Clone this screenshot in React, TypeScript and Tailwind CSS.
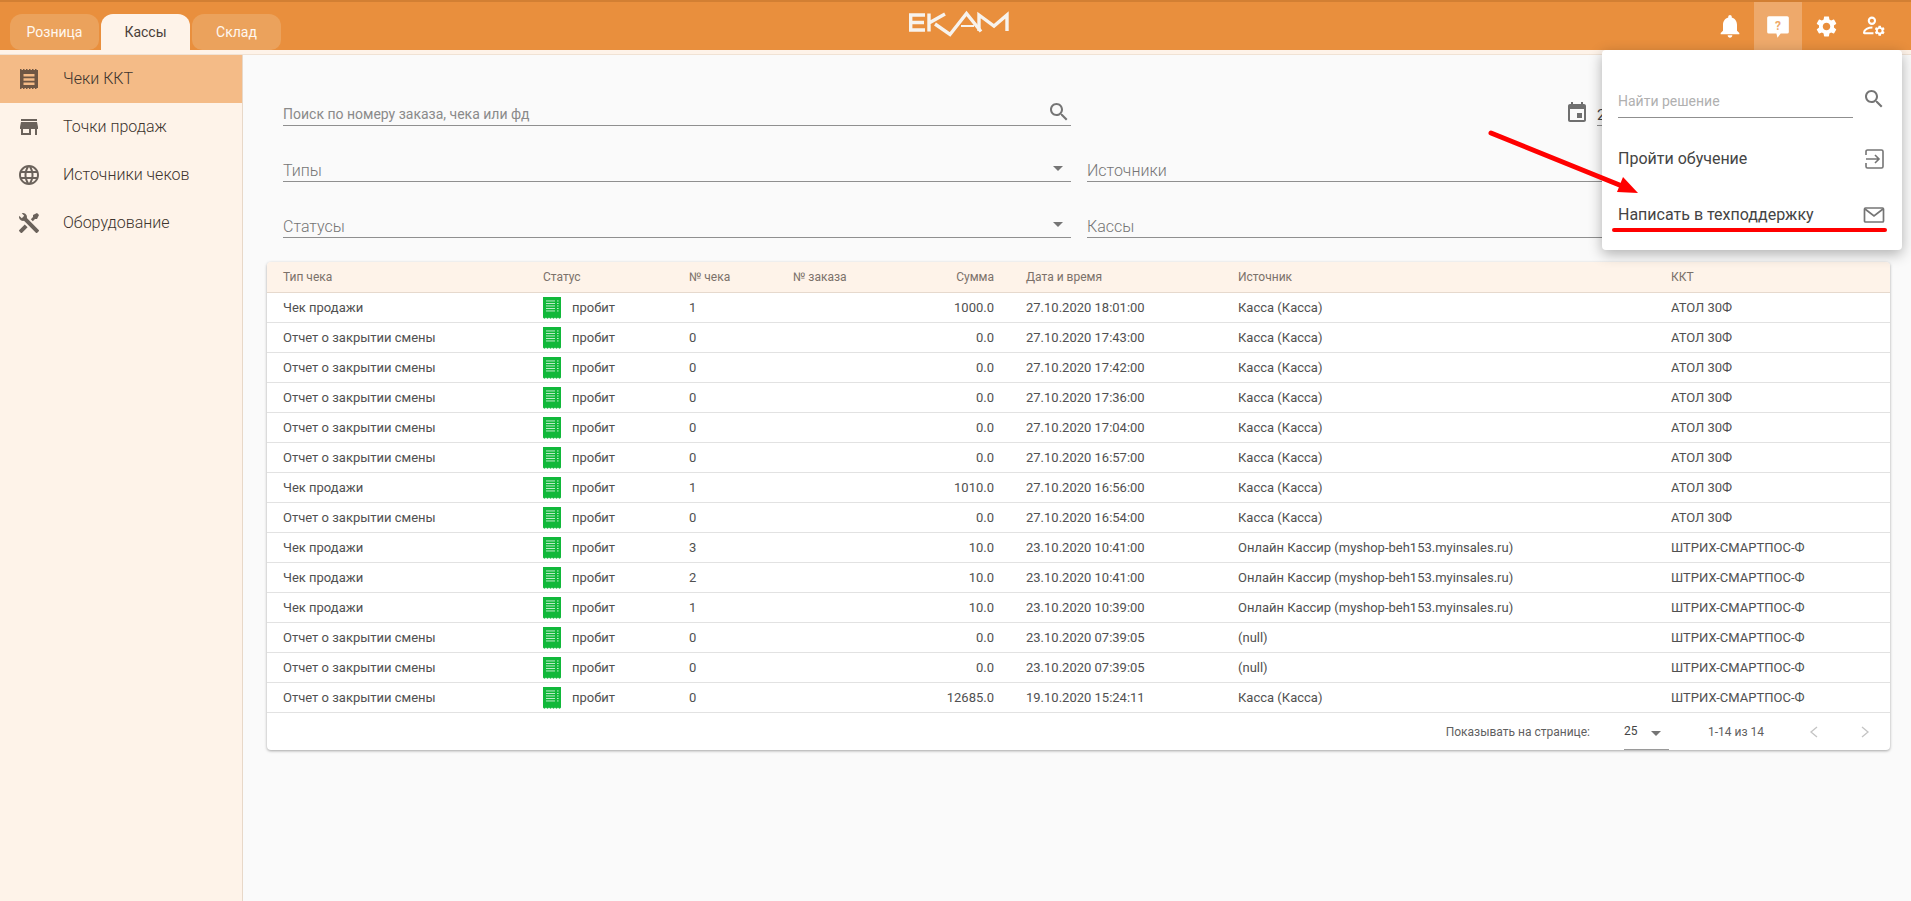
import React from "react";

const P = {
  search: "M15.5 14h-.79l-.28-.27C15.41 12.59 16 11.11 16 9.5 16 5.91 13.09 3 9.5 3S3 5.91 3 9.5 5.91 16 9.5 16c1.61 0 3.09-.59 4.23-1.57l.27.28v.79l5 4.99L20.49 19l-4.99-5zm-6 0C7.01 14 5 11.99 5 9.5S7.01 5 9.5 5 14 7.01 14 9.5 11.99 14 9.5 14z",
  event: "M17 12h-5v5h5v-5zM16 1v2H8V1H6v2H5c-1.11 0-1.99.9-1.99 2L3 19c0 1.1.89 2 2 2h14c1.1 0 2-.9 2-2V5c0-1.1-.9-2-2-2h-1V1h-2zm3 18H5V8h14v11z",
  bell: "M12 22c1.1 0 2-.9 2-2h-4c0 1.1.89 2 2 2zm6-6v-5c0-3.07-1.64-5.64-4.5-6.32V4c0-.83-.67-1.5-1.5-1.5s-1.5.67-1.5 1.5v.68C7.63 5.36 6 7.92 6 11v5l-2 2v1h16v-1l-2-2z",
  gear: "M19.14 12.94c.04-.3.06-.61.06-.94 0-.32-.02-.64-.07-.94l2.03-1.58c.18-.14.23-.41.12-.61l-1.92-3.32c-.12-.22-.37-.29-.59-.22l-2.39.96c-.5-.38-1.03-.7-1.62-.94l-.36-2.54c-.04-.24-.24-.41-.48-.41h-3.84c-.24 0-.43.17-.47.41l-.36 2.54c-.59.24-1.13.57-1.62.94l-2.39-.96c-.22-.08-.47 0-.59.22L2.74 8.87c-.12.21-.08.47.12.61l2.03 1.58c-.05.3-.09.63-.09.94s.02.64.07.94l-2.03 1.58c-.18.14-.23.41-.12.61l1.92 3.32c.12.22.37.29.59.22l2.39-.96c.5.38 1.03.7 1.62.94l.36 2.54c.05.24.24.41.48.41h3.84c.24 0 .44-.17.47-.41l.36-2.54c.59-.24 1.13-.56 1.62-.94l2.39.96c.22.08.47 0 .59-.22l1.92-3.32c.12-.22.07-.47-.12-.61l-2.01-1.58zM12 15.6c-1.98 0-3.6-1.62-3.6-3.6s1.62-3.6 3.6-3.6 3.6 1.62 3.6 3.6-1.62 3.6-3.6 3.6z",
  store: "M20 4H4v2h16V4zm1 10v-2l-1-5H4l-1 5v2h1v6h10v-6h4v6h2v-6h1zm-9 4H6v-4h6v4z",
  globe: "M11.99 2C6.47 2 2 6.48 2 12s4.47 10 9.99 10C17.52 22 22 17.52 22 12S17.52 2 11.99 2zm6.93 6h-2.95c-.32-1.25-.78-2.45-1.38-3.56 1.84.63 3.37 1.91 4.33 3.56zM12 4.04c.83 1.2 1.48 2.53 1.91 3.96h-3.82c.43-1.43 1.08-2.76 1.91-3.96zM4.26 14C4.1 13.36 4 12.69 4 12s.1-1.36.26-2h3.38c-.08.66-.14 1.32-.14 2 0 .68.06 1.34.14 2H4.26zm.82 2h2.95c.32 1.25.78 2.45 1.38 3.56-1.84-.63-3.37-1.9-4.33-3.56zm2.95-8H5.08c.96-1.66 2.49-2.93 4.33-3.56C8.81 5.55 8.35 6.75 8.03 8zM12 19.96c-.83-1.2-1.48-2.53-1.91-3.96h3.82c-.43 1.43-1.08 2.76-1.91 3.96zM14.34 14H9.66c-.09-.66-.16-1.32-.16-2 0-.68.07-1.35.16-2h4.68c.09.65.16 1.32.16 2 0 .68-.07 1.34-.16 2zm.25 5.56c.6-1.11 1.06-2.31 1.38-3.56h2.95c-.96 1.65-2.49 2.93-4.33 3.56zM16.36 14c.08-.66.14-1.32.14-2 0-.68-.06-1.34-.14-2h3.38c.16.64.26 1.31.26 2s-.1 1.36-.26 2h-3.38z",
  tools: "M21.71 20.29L20.29 21.71A1 1 0 0 1 18.88 21.71L7 9.85A3.81 3.81 0 0 1 6 10A4 4 0 0 1 2.22 4.7L4.76 7.24L5.29 6.71L6.71 5.29L7.24 4.76L4.7 2.22A4 4 0 0 1 10 6A3.81 3.81 0 0 1 9.85 7L21.71 18.88A1 1 0 0 1 21.71 20.29M2.29 18.88A1 1 0 0 0 2.29 20.29L3.71 21.71A1 1 0 0 0 5.12 21.71L10.59 16.25L7.76 13.42M20 2L16 4V6L13.83 8.17L15.83 10.17L18 8H20L22 4Z",
  receiptNav: "M3 2h1.500v1H6V2h1.500v1H9V2h1.500v1H12V2h1.500v1H15V2h1.500v1H18V2h1.500v1H21v18h-1.500v1H18v-1h-1.500v1H15v-1h-1.500v1H12v-1h-1.500v1H9v-1H7.500v1H6v-1H4.500v1H3zM6.500 7v2.500h11V7zm0 4.300v2.500h11v-2.500zm0 4.300v2.500h11v-2.500z",
};

function Ico({ d, className }: { d: string; className: string }) {
  return (
    <svg viewBox="0 0 24 24" className={className} fill="currentColor">
      <path d={d} />
    </svg>
  );
}

function Caret({ className }: { className: string }) {
  return (
    <svg viewBox="0 0 10 5" className={className} fill="currentColor">
      <path d="M0 0h10L5 5z" />
    </svg>
  );
}

function ReceiptGreen() {
  return (
    <svg viewBox="0 0 18 22" className="w-[18px] h-[22px] shrink-0">
      <path
        d="M0 0h18v20.500c-.75 1.500-2.250 1.500-3 0-.75 1.500-2.250 1.500-3 0-.75 1.500-2.250 1.500-3 0-.75 1.500-2.250 1.500-3 0-.75 1.500-2.250 1.500-3 0-.75 1.500-2.250 1.500-3 0z"
        fill="#11b83a"
      />
      <g fill="#ffffff" opacity="0.8">
        <rect x="3" y="3.500" width="9" height="0.900" />
        <rect x="3" y="6" width="9" height="0.900" />
        <rect x="3" y="8.500" width="9" height="0.900" />
        <rect x="3" y="11" width="9" height="0.900" />
        <rect x="3" y="13.500" width="9" height="0.900" />
        <rect x="14" y="3.500" width="1.600" height="0.900" />
        <rect x="14" y="6" width="1.600" height="0.900" />
        <rect x="14" y="8.500" width="1.600" height="0.900" />
        <rect x="14" y="11" width="1.600" height="0.900" />
        <rect x="14" y="13.500" width="1.600" height="0.900" />
      </g>
    </svg>
  );
}

const COLS = "grid grid-cols-[260px_146px_104px_100px_133px_212px_433px_1fr] pl-4 items-center";

const S1 = "Отчет о закрытии смены";
const S2 = "Чек продажи";
const K = "Касса (Касса)";
const O = "Онлайн Кассир (myshop-beh153.myinsales.ru)";
const A = "АТОЛ 30Ф";
const H = "ШТРИХ-СМАРТПОС-Ф";

const rows: [string, string, string, string, string, string][] = [
  [S2, "1", "1000.0", "27.10.2020 18:01:00", K, A],
  [S1, "0", "0.0", "27.10.2020 17:43:00", K, A],
  [S1, "0", "0.0", "27.10.2020 17:42:00", K, A],
  [S1, "0", "0.0", "27.10.2020 17:36:00", K, A],
  [S1, "0", "0.0", "27.10.2020 17:04:00", K, A],
  [S1, "0", "0.0", "27.10.2020 16:57:00", K, A],
  [S2, "1", "1010.0", "27.10.2020 16:56:00", K, A],
  [S1, "0", "0.0", "27.10.2020 16:54:00", K, A],
  [S2, "3", "10.0", "23.10.2020 10:41:00", O, H],
  [S2, "2", "10.0", "23.10.2020 10:41:00", O, H],
  [S2, "1", "10.0", "23.10.2020 10:39:00", O, H],
  [S1, "0", "0.0", "23.10.2020 07:39:05", "(null)", H],
  [S1, "0", "0.0", "23.10.2020 07:39:05", "(null)", H],
  [S1, "0", "12685.0", "19.10.2020 15:24:11", K, H],
];

function NavItem({ d, label, active }: { d: string; label: string; active?: boolean }) {
  return (
    <div className={`h-12 flex items-center pl-[17px] ${active ? "bg-[#f4bb87]" : ""}`}>
      <Ico d={d} className={`w-6 h-6 ${active ? "text-[#6e5644]" : "text-[#6b625b]"}`} />
      <span className="ml-[22px] text-[16px] font-light text-[#3d342e]">{label}</span>
    </div>
  );
}

function Field({ label, caret, className }: { label: string; caret?: boolean; className: string }) {
  return (
    <div className={`h-[31px] border-b border-[#8f8f8f] flex items-end justify-between ${className}`}>
      <span className="text-[16px] font-light leading-[20px] text-[#757575]">{label}</span>
      {caret && <Caret className="w-[10px] h-[5px] mb-[10px] mr-[8px] text-[#757575]" />}
    </div>
  );
}

function Tab({ label, active }: { label: string; active?: boolean }) {
  return (
    <div
      className={`h-[36px] w-[89px] rounded-t-[12px] rounded-b-[10px] flex items-center justify-center text-[14px] ${
        active ? "bg-[#fef3e9] text-[#4a4039] rounded-b-none" : "bg-[#eba25c] text-[#fff8f0]"
      }`}
    >
      {label}
    </div>
  );
}

export default function App() {
  return (
    <div className="relative w-[1911px] h-[901px] overflow-hidden bg-[#fafafa] flex flex-col font-['Roboto',sans-serif]">
      <header className="relative h-[50px] shrink-0 bg-[#e98f3d] border-t-2 border-[#d27f33] flex items-end justify-between">
        <div className="flex gap-[2px] pl-[10px]">
          <Tab label="Розница" />
          <Tab label="Кассы" active />
          <Tab label="Склад" />
        </div>
        <svg viewBox="0 0 104 28" className="absolute left-[907px] top-[8px] w-[104px] h-[28px]" role="img" aria-label="EKAM">
          <g fill="none" stroke="#f7f3ee" strokeWidth="3.400">
            <path d="M18 5H3.700v15H18M3.700 12.500H17" />
            <path d="M22 3.500v18M22 13L38 4" />
            <path d="M28 14l15 10.500L59.500 3.500 74 21.500" />
            <path d="M54 16h13" strokeWidth="2" />
            <path d="M72 21V5l15 11L100 5v16" />
          </g>
        </svg>
        <div className="flex items-stretch h-[48px] pr-[13px]">
          <div className="w-[48px] flex items-center justify-center">
            <Ico d={P.bell} className="w-[28px] h-[28px] text-white" />
          </div>
          <div className="w-[48px] bg-[#eea96b] flex items-center justify-center">
            <svg viewBox="0 0 24 24" className="w-[26px] h-[26px] mt-[1px]">
              <path d="M3.500 2h17A1.500 1.500 0 0 1 22 3.500v13a1.500 1.500 0 0 1-1.500 1.500H14.500l-3 4-1-4H3.500A1.500 1.500 0 0 1 2 16.500v-13A1.500 1.500 0 0 1 3.500 2z" fill="#fff" />
              <text x="12" y="14.500" textAnchor="middle" fontSize="11" fontWeight="700" fill="#eea96b" fontFamily="Roboto, sans-serif">?</text>
            </svg>
          </div>
          <div className="w-[48px] flex items-center justify-center">
            <Ico d={P.gear} className="w-[25px] h-[25px] text-white" />
          </div>
          <div className="w-[48px] flex items-center justify-center">
            <svg viewBox="0 0 24 24" className="w-[25px] h-[25px] text-white">
              <circle cx="9.500" cy="6.500" r="3" fill="none" stroke="currentColor" strokeWidth="2" />
              <path d="M2 19v-1.500c0-2.500 4-4.500 8-4.500M2 18.500h9" fill="none" stroke="currentColor" strokeWidth="2" />
              <svg x="11" y="10" width="12" height="12" viewBox="0 0 24 24">
                <path d={P.gear} fill="currentColor" />
              </svg>
            </svg>
          </div>
        </div>
      </header>
      <div className="h-[5px] shrink-0 bg-[#fef3e9] border-b border-[#f0e2d4]" />

      <div className="flex-1 flex min-h-0">
        <aside className="w-[243px] shrink-0 bg-[#fef3e9] border-r border-[#e8d8c8]">
          <NavItem d={P.receiptNav} label="Чеки ККТ" active />
          <NavItem d={P.store} label="Точки продаж" />
          <NavItem d={P.globe} label="Источники чеков" />
          <NavItem d={P.tools} label="Оборудование" />
        </aside>

        <main className="flex-1 min-w-0 pl-[24px] pr-[21px]">
          <div className="pl-[16px] pt-[40px]">
            <div className="flex items-end">
              <div className="h-[31px] w-[788px] border-b border-[#8f8f8f] flex items-end justify-between">
                <span className="text-[14px] leading-[20px] pb-[1px] text-[#8a8a8a]">Поиск по номеру заказа, чека или фд</span>
                <Ico d={P.search} className="w-[24px] h-[24px] mb-[1px] text-[#757575]" />
              </div>
              <Ico d={P.event} className="w-[24px] h-[24px] ml-[494px] mb-[1px] text-[#6f6f6f]" />
              <div className="ml-[8px] h-[31px] w-[120px] border-b border-[#8f8f8f] text-[15px] leading-[20px] pt-[10px] text-[#444]">27.10.2020</div>
            </div>
            <div className="flex gap-[16px] mt-[25px]">
              <Field label="Типы" caret className="w-[788px]" />
              <Field label="Источники" caret className="w-[784px]" />
            </div>
            <div className="flex gap-[16px] mt-[25px]">
              <Field label="Статусы" caret className="w-[788px]" />
              <Field label="Кассы" caret className="w-[784px]" />
            </div>
          </div>

          <section className="mt-[24px] bg-white rounded-[4px] shadow-[0_1px_3px_rgba(0,0,0,0.35)] text-[13px]">
            <div className={`${COLS} h-[31px] bg-[#fef3e9] border-b border-[#e6d9cd] text-[#7b716a] text-[12px] rounded-t-[4px]`}>
              <div>Тип чека</div>
              <div>Статус</div>
              <div>№ чека</div>
              <div>№ заказа</div>
              <div className="text-right pr-[32px]">Сумма</div>
              <div>Дата и время</div>
              <div>Источник</div>
              <div>ККТ</div>
            </div>
            {rows.map((r, i) => (
              <div key={i} className={`${COLS} h-[30px] border-b border-[#e2e2e2] text-[#505050]`}>
                <div>{r[0]}</div>
                <div className="flex items-center gap-[11px]">
                  <ReceiptGreen />
                  <span>пробит</span>
                </div>
                <div>{r[1]}</div>
                <div />
                <div className="text-right pr-[32px]">{r[2]}</div>
                <div>{r[3]}</div>
                <div>{r[4]}</div>
                <div>{r[5]}</div>
              </div>
            ))}
            <div className="h-[37px] flex items-center justify-end text-[12px] text-[#5f5f5f]">
              <span>Показывать на странице:</span>
              <div className="ml-[34px] w-[45px] h-[36px] border-b border-[#9a9a9a] flex items-center justify-between">
                <span className="text-[#444]">25</span>
                <Caret className="w-[10px] h-[5px] mr-[8px] mt-[5px] text-[#757575]" />
              </div>
              <span className="ml-[39px]">1-14 из 14</span>
              <svg viewBox="0 0 10 12" className="ml-[45px] w-[10px] h-[12px] text-[#c4c4c4]" fill="none" stroke="currentColor" strokeWidth="1.300">
                <path d="M8 1L2 6l6 5" />
              </svg>
              <svg viewBox="0 0 10 12" className="ml-[41px] mr-[20px] w-[10px] h-[12px] text-[#c4c4c4]" fill="none" stroke="currentColor" strokeWidth="1.300">
                <path d="M2 1l6 5-6 5" />
              </svg>
            </div>
          </section>
        </main>
      </div>

      {/* popup menu */}
      <div className="absolute left-[1602px] top-[50px] w-[300px] h-[200px] bg-white rounded-[4px] shadow-[0_4px_14px_rgba(0,0,0,0.3)] pt-[30px] pl-[16px] pr-[16px]">
        <div className="flex items-center justify-between">
          <div className="w-[235px] h-[38px] border-b border-[#8f8f8f] text-[14px] leading-[20px] pt-[11px] text-[#b0b0b0] shrink-0">Найти решение</div>
          <Ico d={P.search} className="w-[24px] h-[24px] text-[#757575]" />
        </div>
        <div className="mt-[27px] flex items-center justify-between h-[28px] text-[16px] text-[#444]">
          <span>Пройти обучение</span>
          <svg viewBox="0 0 24 24" className="w-[24px] h-[24px] text-[#757575]" fill="none" stroke="currentColor" strokeWidth="1.600">
            <path d="M4 8V4.500A1.500 1.500 0 0 1 5.500 3h14A1.500 1.500 0 0 1 21 4.500v15a1.500 1.500 0 0 1-1.500 1.500h-14A1.500 1.500 0 0 1 4 19.500V16M4 12h13M13 8l4 4-4 4" />
          </svg>
        </div>
        <div className="mt-[28px] flex items-center justify-between h-[28px] text-[16px] text-[#444]">
          <span>Написать в техподдержку</span>
          <svg viewBox="0 0 24 24" className="w-[24px] h-[24px] text-[#757575]" fill="none" stroke="currentColor" strokeWidth="1.700">
            <rect x="2.500" y="5" width="19" height="14" rx="1" />
            <path d="M3 6l9 7 9-7" />
          </svg>
        </div>
      </div>

      {/* annotation */}
      <svg className="absolute left-0 top-0 w-[1911px] h-[901px] pointer-events-none" viewBox="0 0 1911 901">
        <path d="M1491 133L1622 186" stroke="#ff0000" strokeWidth="5" strokeLinecap="round" fill="none" />
        <path d="M1638 193L1617 192L1623 177z" fill="#ff0000" />
        <path d="M1614 230H1885" stroke="#ff0000" strokeWidth="4" strokeLinecap="round" fill="none" />
      </svg>
    </div>
  );
}
